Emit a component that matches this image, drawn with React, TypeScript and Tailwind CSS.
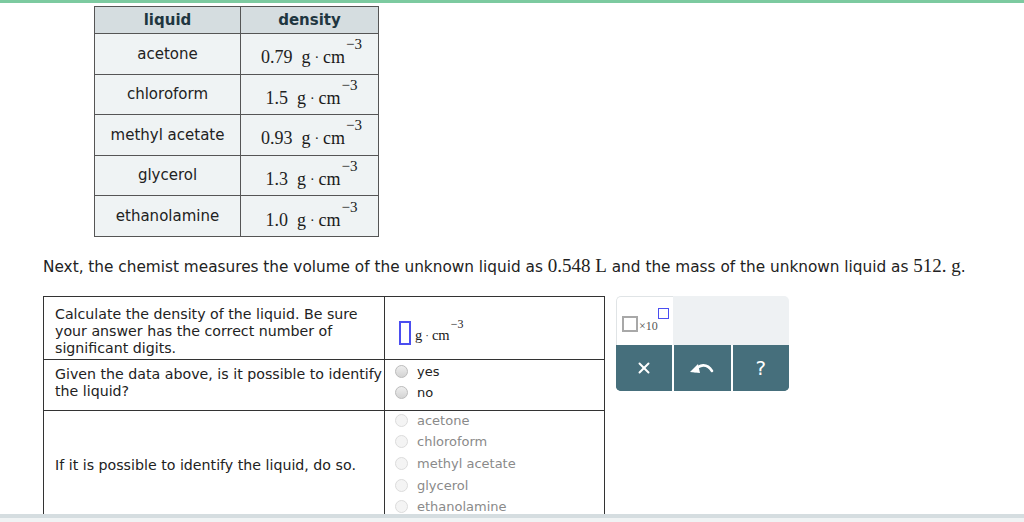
import { X } from 'lucide-react'

const liquids = [
  { name: 'acetone', density: '0.79' },
  { name: 'chloroform', density: '1.5' },
  { name: 'methyl acetate', density: '0.93' },
  { name: 'glycerol', density: '1.3' },
  { name: 'ethanolamine', density: '1.0' },
]

const sans = "font-['DejaVu_Sans',Verdana,sans-serif]"
const serif = "font-['Liberation_Serif',serif]"

function Unit({ big }: { big?: boolean }) {
  return (
    <span className={`${serif} ${big ? 'text-[18px]' : 'text-[14.5px]'} text-[#1a1a1a] whitespace-nowrap`}>
      g<span className={`${big ? 'mx-[4px] text-[14px]' : 'mx-[3px] text-[11px]'} relative -top-[1px]`}>·</span>cm
      <span className={`relative ml-[1px] ${big ? '-top-[14px] text-[15px]' : '-top-[12px] text-[12px]'}`}>−3</span>
    </span>
  )
}

function Radio({ label, disabled }: { label: string; disabled?: boolean }) {
  return (
    <div className="flex items-center h-[21.6px]">
      <span
        className={`w-[13px] h-[13px] rounded-full border ${
          disabled ? 'border-[#dcdcdc] bg-[#f4f4f4]' : 'border-[#bdbdbd] bg-gradient-to-b from-[#eeeeee] to-[#d4d4d4]'
        }`}
      />
      <span className={`ml-[9px] text-[13px] ${disabled ? 'text-[#8a8a8a]' : 'text-[#222]'}`}>{label}</span>
    </div>
  )
}

function UndoIcon() {
  return (
    <svg width="26" height="14" viewBox="0 0 26 14">
      <path d="M6 10 C10 3, 18 2, 23 10" fill="none" stroke="white" strokeWidth="2.6" strokeLinecap="round" />
      <path d="M1 11 L9 3 L11 12 Z" fill="white" />
    </svg>
  )
}

export default function App() {
  return (
    <div className={`relative w-[1024px] h-[522px] overflow-hidden bg-white ${sans}`}>
      <div className="h-[3px] bg-[#7ccaa0]" />

      {/* reference table */}
      <table className="ml-[94px] mt-[3px] border-collapse text-[15px] text-[#222]">
        <thead>
          <tr className="h-[27px] bg-[#d5dde0]">
            <th className="w-[146px] border border-[#555] font-bold text-[#1f3640]">liquid</th>
            <th className="w-[138px] border border-[#555] font-bold text-[#1f3640]">density</th>
          </tr>
        </thead>
        <tbody>
          {liquids.map((l) => (
            <tr key={l.name} className="h-[40.6px] bg-[#eff3f4]">
              <td className="border border-[#555] text-center">{l.name}</td>
              <td className="border border-[#555] text-center pt-[8px] pl-[4px]">
                <span className={`${serif} text-[18px] mr-[9px]`}>{l.density}</span>
                <Unit big />
              </td>
            </tr>
          ))}
        </tbody>
      </table>

      <p className="ml-[43px] mt-[15px] text-[15.3px] text-[#222]">
        Next, the chemist measures the volume of the unknown liquid as{' '}
        <span className={`${serif} text-[19px]`}>0.548 L</span> and the mass of the unknown liquid as{' '}
        <span className={`${serif} text-[19px]`}>512. g</span>.
      </p>

      <div className="flex items-start ml-[43px] mt-[16px]">
        {/* question table */}
        <table className="border-collapse text-[14.2px] leading-[17px] text-[#222]">
          <tbody>
            <tr className="h-[63px]">
              <td className="w-[341px] border border-[#333] pl-[11px] pr-[10px] align-top pt-[9px]">
                Calculate the density of the liquid. Be sure your answer has the correct number of significant digits.
              </td>
              <td className="w-[220px] border border-[#333] pl-[14px]">
                <div className="flex items-end pt-[10px]">
                  <span className="w-[12px] h-[24px] border-2 border-[#4b4ef0] mr-[4px]" />
                  <Unit />
                </div>
              </td>
            </tr>
            <tr className="h-[51px]">
              <td className="border border-[#333] pl-[11px] pr-0 align-top pt-[6px]">
                Given the data above, is it possible to identify the liquid?
              </td>
              <td className="border border-[#333] pl-[10px] align-top pt-0">
                <Radio label="yes" />
                <Radio label="no" />
              </td>
            </tr>
            <tr className="h-[110px]">
              <td className="border border-[#333] pl-[11px]">If it is possible to identify the liquid, do so.</td>
              <td className="border border-[#333] pl-[10px] align-top">
                <div className="-mt-[2px]">
                  {liquids.map((l) => (
                    <Radio key={l.name} label={l.name} disabled />
                  ))}
                </div>
              </td>
            </tr>
          </tbody>
        </table>

        {/* answer tools */}
        <div className="ml-[11px] w-[173px] rounded-[5px] overflow-hidden">
          <div className="flex h-[49px] bg-[#eef1f3]">
            <div className="w-[57px] bg-white border-l border-t border-[#e0e4e6] rounded-tl-[5px] flex items-center pl-[5px] pt-[6px]">
              <span className="w-[16px] h-[16px] border-2 border-[#a8a8a8]" />
              <span className={`${serif} text-[12px] text-[#555] ml-[1px] mt-[4px]`}>×10</span>
              <span className="w-[11px] h-[11px] border-[1.5px] border-[#4b4ef0] -mt-[22px]" />
            </div>
          </div>
          <div className="flex h-[46px] bg-[#466f7c]">
            <button className="flex-1 flex items-center justify-center bg-[#466f7c]">
              <X size={18} strokeWidth={2.6} color="white" />
            </button>
            <button className="flex-1 flex items-center justify-center bg-[#466f7c] border-l-2 border-white">
              <UndoIcon />
            </button>
            <button className="flex-1 flex items-center justify-center bg-[#466f7c] border-l-2 border-white text-white text-[20px]">
              ?
            </button>
          </div>
        </div>
      </div>

      {/* bottom bar */}
      <div className="absolute left-0 right-0 bottom-0 h-[8px] bg-[#f0f3f4]">
        <div className="h-[4px] bg-[#d5dde0]" />
      </div>
    </div>
  )
}
